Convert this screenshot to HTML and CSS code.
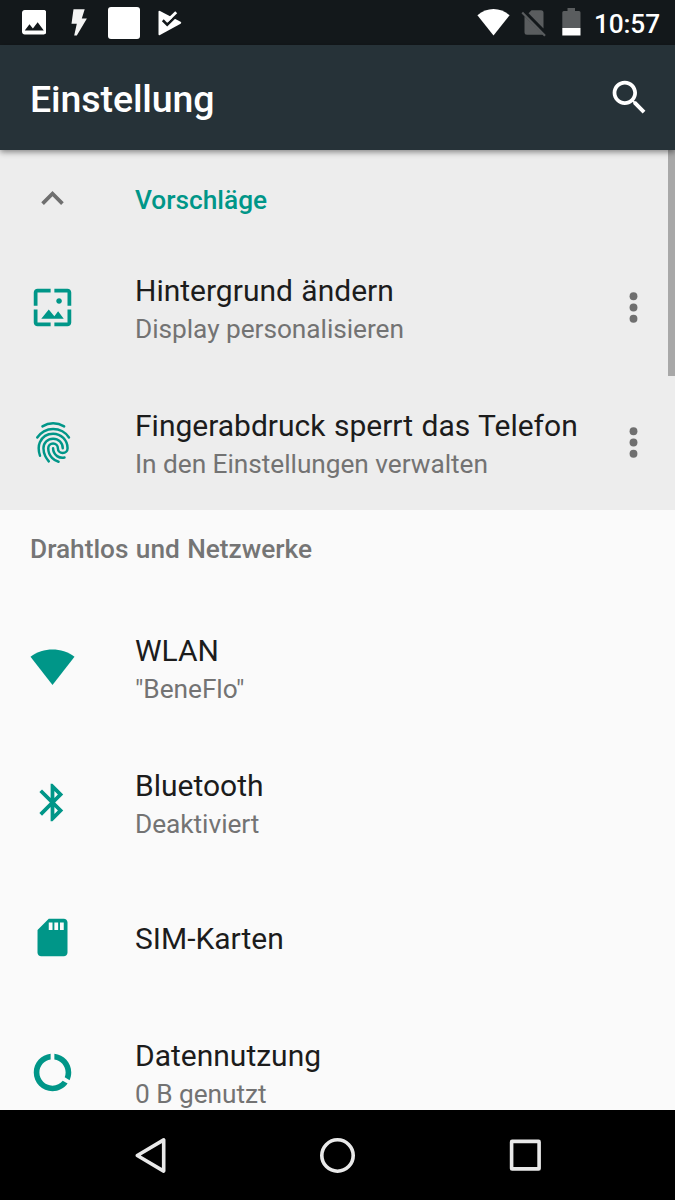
FILE: index.html
```html
<!DOCTYPE html>
<html lang="de">
<head>
<meta charset="utf-8">
<title>Einstellung</title>
<link rel="stylesheet" href="styles.css">
</head>
<body>
<div class="screen">
  <div class="status-bar">
    <div class="status-left">
      <svg class="s-image" viewBox="3 3 18 18"><path d="M21 19V5c0-1.100-.9-2-2-2H5c-1.100 0-2 .9-2 2v14c0 1.100.9 2 2 2h14c1.100 0 2-.9 2-2zM8.500 13.500l2.500 3.010L14.500 12l4.500 6H5z"/></svg>
      <svg class="s-flash" viewBox="0 0 16 27"><path d="M2.500 .3H13.700L10.800 9.500H15.900L5.800 26.500H3.200L5.800 14.800H.5Z"/></svg>
      <span class="s-square"></span>
      <svg class="s-play" viewBox="0 0 24 26"><path d="M.5 1.800Q.5 .3 2 1L22.600 11.700Q24 12.700 22.600 13.700L2 25Q.5 25.700 .5 24.200Z"/><path d="M4.800 10.300L9.200 14.600 20 4" class="s-play-check"/><path d="M8.800 11.300L18.200 2.300" class="s-play-bar"/></svg>
    </div>
    <div class="status-right">
      <svg class="s-wifi" viewBox="0 0 33 27"><path d="M.4 6.300C10-2 23-2 32.600 6.300L16.500 26.600Z"/></svg>
      <svg class="s-sim" viewBox="0 0 25 27"><path d="M7.500 3.200L10.500 .3H20Q22.500 .3 22.500 2.800V18.500ZM3.500 6.200L22 24.200Q21.300 24.800 20 24.800H6Q3.500 24.800 3.500 22.300Z"/><path class="s-sim-slash" d="M1.200 2.500L24 25.700"/></svg>
      <svg class="s-battery" viewBox="0 0 19 28"><path class="s-battery-top" d="M5.500 0H13V3H17Q18.500 3 18.500 4.500V20H.3V4.500Q.3 3 1.800 3H5.500Z"/><path d="M.3 20H18.500V27.500H.3Z"/></svg>
      <span class="clock">10:57</span>
    </div>
  </div>

  <header class="toolbar">
    <h1 class="toolbar-title">Einstellung</h1>
    <svg class="icon search" viewBox="0 0 24 24"><path d="M15.500 14h-.79l-.28-.27C15.410 12.590 16 11.110 16 9.500 16 5.910 13.090 3 9.500 3S3 5.910 3 9.500 5.910 16 9.500 16c1.610 0 3.090-.59 4.230-1.570l.27.28v.79l5 4.990L20.490 19l-4.990-5zm-6 0C7.010 14 5 11.990 5 9.500S7.010 5 9.500 5 14 7.010 14 9.500 11.990 14 9.500 14z"/></svg>
  </header>

  <main class="content">
    <section class="suggestions">
      <div class="suggestions-header">
        <svg class="icon grey" viewBox="0 0 24 24"><path d="M12 8l-6 6 1.410 1.410L12 10.830l4.590 4.580L18 14z"/></svg>
        <span class="suggestions-title">Vorschläge</span>
      </div>
      <div class="row">
        <svg class="icon" viewBox="0 0 24 24"><path d="M4 4h7V2H4c-1.100 0-2 .9-2 2v7h2V4zm6 9l-4 5h12l-3-4-2.030 2.710L10 13zm7-4.500c0-.83-.67-1.500-1.500-1.500S14 7.670 14 8.500s.67 1.500 1.500 1.500S17 9.330 17 8.500zM20 2h-7v2h7v7h2V4c0-1.100-.9-2-2-2zm0 18h-7v2h7c1.100 0 2-.9 2-2v-7h-2v7zM4 13H2v7c0 1.100.9 2 2 2h7v-2H4v-7z"/></svg>
        <div class="text">
          <div class="title">Hintergrund ändern</div>
          <div class="summary">Display personalisieren</div>
        </div>
        <svg class="icon grey more" viewBox="0 0 24 24"><circle cx="12" cy="6" r="2.100"/><circle cx="12" cy="12" r="2.100"/><circle cx="12" cy="18" r="2.100"/></svg>
      </div>
      <div class="row">
        <svg class="icon fingerprint" viewBox="-49.050 -50.200 30.900 30.900">
          <path d="M-25.600 -45.850c-2.270-1.310-4.710-2.070-7.560-2.070s-5.230.78-7.340 2.070"/>
          <path d="M-44.060 -38.170c1.190-1.770 2.670-3.240 4.560-4.270 1.880-1.030 4.040-1.610 6.340-1.610 2.290 0 4.440.58 6.320 1.600 1.880 1.020 3.360 2.480 4.550 4.240"/>
          <path d="M-42.190 -25.680c-.76-2.140-.9-3.870-.9-5.130 0-1.460.25-2.850.82-4.100 1.560-3.450 5.030-5.850 9.070-5.850 5.490 0 9.950 4.450 9.950 9.950 0 1.830-1.490 3.320-3.320 3.320s-3.320-1.490-3.320-3.320-1.480-3.320-3.320-3.320-3.320 1.490-3.320 3.320c0 2.570.99 4.890 2.610 6.590 1.220 1.290 2.430 2.100 4.480 2.690"/>
          <path d="M-36.140 -21.780c-1.010-1.190-1.580-1.920-2.370-3.500-.83-1.660-1.310-3.490-1.310-5.490 0-3.660 2.970-6.630 6.630-6.630s6.630 2.970 6.630 6.630"/>
          <path d="M-25.360 -24.410c-.57.1-1.130.14-1.450.14-1.300 0-2.530-.34-3.620-1.120-1.680-1.200-2.770-3.170-2.770-5.390"/>
        </svg>
        <div class="text">
          <div class="title">Fingerabdruck sperrt das Telefon</div>
          <div class="summary">In den Einstellungen verwalten</div>
        </div>
        <svg class="icon grey more" viewBox="0 0 24 24"><circle cx="12" cy="6" r="2.100"/><circle cx="12" cy="12" r="2.100"/><circle cx="12" cy="18" r="2.100"/></svg>
      </div>
    </section>

    <section>
      <h2 class="category">Drahtlos und Netzwerke</h2>
      <div class="row">
        <svg class="icon" viewBox="0 0 45 45"><path d="M.5 11.800C13.500 2.100 31.500 2.100 44.500 11.800L22.500 40Z"/></svg>
        <div class="text">
          <div class="title">WLAN</div>
          <div class="summary">"BeneFlo"</div>
        </div>
      </div>
      <div class="row">
        <svg class="icon" viewBox="0 0 24 24"><path d="M17.710 7.710L12 2h-1v7.590L6.410 5 5 6.410 10.590 12 5 17.590 6.410 19 11 14.410V22h1l5.710-5.710-4.300-4.290 4.300-4.290zM13 5.830l1.880 1.880L13 9.590V5.830zm1.880 10.460L13 18.170v-3.760l1.880 1.880z"/></svg>
        <div class="text">
          <div class="title">Bluetooth</div>
          <div class="summary">Deaktiviert</div>
        </div>
      </div>
      <div class="row">
        <svg class="icon" viewBox="0 0 24 24"><path d="M18 2h-8L4.020 8 4 20c0 1.100.9 2 2 2h12c1.100 0 2-.9 2-2V4c0-1.100-.9-2-2-2zm-6 6h-2V4h2v4zm3 0h-2V4h2v4zm3 0h-2V4h2v4z"/></svg>
        <div class="text">
          <div class="title">SIM-Karten</div>
        </div>
      </div>
      <div class="row">
        <svg class="icon" viewBox="0 0 24 24"><path d="M13 2.050v3.030c3.390.49 6 3.390 6 6.920 0 .9-.18 1.750-.48 2.540l2.600 1.530c.56-1.240.88-2.620.88-4.070 0-5.180-3.950-9.450-9-9.950zM12 19c-3.870 0-7-3.130-7-7 0-3.530 2.610-6.430 6-6.920V2.050c-5.060.5-9 4.760-9 9.950 0 5.520 4.470 10 9.990 10 3.310 0 6.240-1.610 8.060-4.090l-2.600-1.530C16.170 17.980 14.210 19 12 19z"/></svg>
        <div class="text">
          <div class="title">Datennutzung</div>
          <div class="summary">0 B genutzt</div>
        </div>
      </div>
    </section>
    <div class="scrollbar"></div>
  </main>

  <nav class="nav-bar">
    <svg class="nav-icon" viewBox="0 0 45 45"><path d="M9.300 22.500L35.700 6.900V38.100Z"/></svg>
    <svg class="nav-icon" viewBox="0 0 45 45"><circle cx="22.500" cy="22.500" r="15.700"/></svg>
    <svg class="nav-icon" viewBox="0 0 45 45"><rect x="8.600" y="8.400" width="27.500" height="27.500" rx=".5"/></svg>
  </nav>
</div>
</body>
</html>
```

FILE: styles.css
```css
* {
  box-sizing: border-box;
}

body {
  margin: 0;
  font-family: Roboto, "Noto Sans", sans-serif;
  color: #1c1c1c;
}

svg {
  display: block;
  flex: none;
}

.screen {
  display: flex;
  flex-direction: column;
  width: 675px;
  height: 1200px;
  overflow: hidden;
  background: #fafafa;
}

/* Status bar */
.status-bar {
  display: flex;
  flex: none;
  justify-content: space-between;
  height: 45px;
  padding: 0 15px 0 21.5px;
  background: #13181b;
  fill: #fff;
}

.status-left,
.status-right {
  display: flex;
  align-items: center;
}

.s-image {
  width: 24.5px;
  height: 24.5px;
}

.s-flash {
  width: 16px;
  height: 27px;
  margin-left: 25px;
  fill: #f4f4f4;
}

.s-square {
  width: 32px;
  height: 32px;
  margin-left: 21px;
  border-radius: 3px;
  background: #fff;
}

.s-play {
  width: 24px;
  height: 26px;
  margin-left: 18px;
}

.s-play-check {
  fill: none;
  stroke: #13181b;
  stroke-width: 2.6;
}

.s-play-bar {
  fill: none;
  stroke: #fff;
  stroke-width: 2.8;
}

.s-wifi {
  width: 33px;
  height: 27px;
}

.s-sim {
  width: 25px;
  height: 27px;
  margin: 1px 0 0 11px;
  fill: #5a5d5f;
}

.s-sim-slash {
  stroke: #5a5d5f;
  stroke-width: 2.2;
}

.s-battery {
  width: 19px;
  height: 28px;
  margin: 0 0 1px 16px;
}

.s-battery-top {
  fill: #5a5d5f;
}

.clock {
  margin: 2px 0 0 12.5px;
  color: #fff;
  font-size: 26.25px;
  font-weight: 500;
  line-height: 30px;
  letter-spacing: -0.1px;
}

/* Toolbar */
.toolbar {
  position: relative;
  z-index: 1;
  display: flex;
  flex: none;
  align-items: center;
  justify-content: space-between;
  height: 105px;
  padding: 0 23px 0 30px;
  background: #263238;
  box-shadow: 0 2px 6px rgba(0, 0, 0, 0.45);
}

.toolbar-title {
  margin: 3px 0 0;
  color: #fff;
  font-size: 37.5px;
  font-weight: 500;
  line-height: 44px;
  letter-spacing: -0.1px;
}

.icon {
  width: 45px;
  height: 45px;
  fill: #009688;
}

.icon.search {
  fill: #fff;
}

.icon.grey {
  fill: #6f6f6f;
}

.icon.fingerprint {
  fill: none;
  stroke: #009688;
  stroke-width: 1.7;
  stroke-linecap: round;
}

/* Settings list */
.content {
  position: relative;
  flex: 1;
  min-height: 0;
  overflow: hidden;
}

.suggestions {
  background: #ededed;
}

.suggestions-header {
  display: flex;
  align-items: center;
  gap: 60px;
  height: 90px;
  padding: 7px 30px 0;
}

.suggestions-title {
  margin-top: 3px;
  color: #009688;
  font-size: 26.25px;
  font-weight: 500;
  line-height: 32px;
}

.row {
  display: flex;
  align-items: center;
  gap: 60px;
  height: 135px;
  padding: 0 19px 0 30px;
}

.text {
  flex: 1;
  padding-top: 2px;
  white-space: nowrap;
}

.title {
  font-size: 30px;
  line-height: 40px;
  word-spacing: 1px;
}

.summary {
  color: #737373;
  font-size: 26.25px;
  line-height: 36px;
  letter-spacing: -0.04px;
}

.row .more {
  margin-left: -60px;
}

.category {
  height: 90px;
  margin: 0;
  padding: 23px 30px 0;
  color: #757575;
  font-size: 26.25px;
  font-weight: 500;
  line-height: 32px;
  word-spacing: 0.8px;
}

.scrollbar {
  position: absolute;
  top: 0;
  right: 0;
  width: 7.5px;
  height: 226px;
  background: #a8a8a8;
}

/* Navigation bar */
.nav-bar {
  display: flex;
  flex: none;
  align-items: center;
  justify-content: center;
  gap: 142.5px;
  height: 90px;
  background: #000;
}

.nav-icon {
  width: 45px;
  height: 45px;
  fill: none;
  stroke: #e9e9e9;
  stroke-width: 3.6;
  stroke-linejoin: round;
}
```
